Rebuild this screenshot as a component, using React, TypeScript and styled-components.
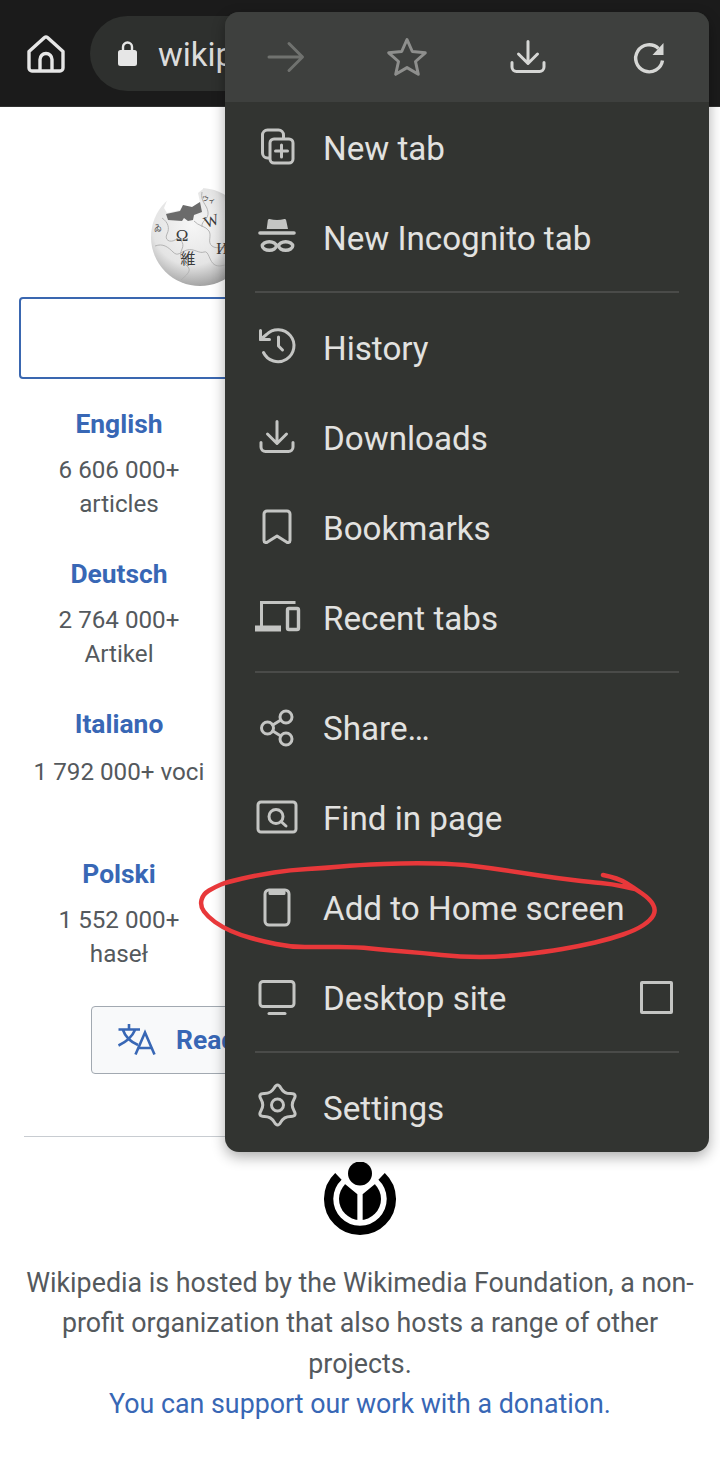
import type { ReactNode } from "react";
import styled, { createGlobalStyle } from "styled-components";

const LINK = "#3867b5";

/* --- styled components --- */

const GlobalStyle = createGlobalStyle`
  html, body {
    margin: 0;
    padding: 0;
    background: #fff;
    font-family: Roboto, "Liberation Sans", sans-serif;
  }
`;

const Screen = styled.div`
  position: relative;
  width: 720px;
  height: 1466px;
  overflow: hidden;
  background: #fff;
`;

const Toolbar = styled.header`
  display: flex;
  align-items: flex-start;
  box-sizing: border-box;
  height: 107px;
  padding: 16px 0 0 27px;
  background: #1b1b1b;
  border-bottom: 1px solid #303130;
`;

const HomeButton = styled.div`
  display: flex;
  margin: 19px 25px 0 0;
`;

const UrlPill = styled.div`
  display: flex;
  align-items: center;
  gap: 21px;
  width: 500px;
  height: 75px;
  padding-left: 28px;
  border-radius: 38px;
  background: #2e302e;
  color: #dcdcdc;
  font-size: 33px;
`;

const UrlText = styled.span`
  padding-top: 2px;
`;

const Page = styled.main`
  display: flex;
  flex-direction: column;
  padding: 0 20px;
`;

const LogoRow = styled.div`
  display: flex;
  height: 100px;
  margin: 81px 0 9px 130px;
`;

const SearchBox = styled.div`
  box-sizing: border-box;
  width: 680px;
  height: 82px;
  margin-left: -1px;
  border: 2px solid #3a67b0;
  border-radius: 4px;
`;

const LangGrid = styled.div`
  display: grid;
  grid-template-columns: 198px 1fr;
  margin: 26px 0 0 0;
`;

const LangCard = styled.div`
  grid-column: 1;
  display: flex;
  flex-direction: column;
  align-items: center;
  height: 150px;
  color: #54595d;
  font-size: 24.2px;
  line-height: 34px;
  text-align: center;
`;

const LangName = styled.div`
  margin-bottom: 10px;
  color: ${LINK};
  font-size: 26.4px;
  font-weight: 700;
  line-height: 38px;
`;

const LangLine = styled.div<{ $shift?: number }>`
  margin-top: ${({ $shift }) => $shift ?? 0}px;
`;

const ReadButton = styled.div`
  display: flex;
  align-items: center;
  gap: 20px;
  box-sizing: border-box;
  width: 538px;
  height: 68px;
  margin: 1px 0 0 71px;
  padding-left: 26px;
  border: 1px solid #a2a9b1;
  border-radius: 4px;
  background: #f8f9fa;
  color: ${LINK};
  font-size: 26.4px;
  font-weight: 700;
`;

const Rule = styled.hr`
  width: 672px;
  height: 1px;
  margin: 62px 0 0 4px;
  border: 0;
  background: #c8ccd1;
`;

const Footer = styled.footer`
  display: flex;
  flex-direction: column;
  align-items: center;
  margin-top: 25px;
  color: #54595d;
  font-size: 26.8px;
  line-height: 40.4px;
  text-align: center;
`;

const FooterText = styled.p`
  width: 680px;
  margin: 27px 0 0 0;
`;

const DonateLink = styled.span`
  color: ${LINK};
`;

const Menu = styled.nav`
  position: absolute;
  top: 12px;
  left: 225px;
  width: 484px;
  height: 1140px;
  overflow: hidden;
  border-radius: 14px;
  background: #323431;
  box-shadow: 0 5px 14px rgba(0, 0, 0, 0.32);
`;

const MenuHeader = styled.div`
  display: grid;
  grid-template-columns: repeat(4, 121px);
  align-items: center;
  justify-items: center;
  height: 90px;
  background: #3e403e;
`;

const HeaderIcon = styled.div<{ $color: string }>`
  display: flex;
  color: ${({ $color }) => $color};
`;

const MenuRow = styled.div`
  display: flex;
  align-items: center;
  height: 90px;
  padding-left: 22px;
  color: #e2e2e0;
  font-size: 33.2px;
`;

const IconSlot = styled.div`
  display: flex;
  justify-content: center;
  flex: none;
  width: 60px;
  margin-right: 16px;
  color: #c4c5c3;
`;

const RowLabel = styled.span`
  flex: 1;
  padding-top: 2px;
`;

const CheckBox = styled.div`
  box-sizing: border-box;
  width: 33px;
  height: 33px;
  margin-right: 36px;
  border: 3.5px solid #c4c5c3;
  border-radius: 2px;
`;

const Divider = styled.div`
  height: 2px;
  margin: 9px 30px;
  background: #4a4b49;
`;

const Scribble = styled.svg`
  position: absolute;
  top: 0;
  left: 0;
  pointer-events: none;
`;

/* --- helpers --- */

type Pt = [number, number];

// quadratic curve through the midpoints, keeps a hand drawn line smooth
const smooth = (pts: Pt[], closed = false) => {
  const mid = (a: Pt, b: Pt): Pt => [(a[0] + b[0]) / 2, (a[1] + b[1]) / 2];
  const fmt = (p: Pt) => `${p[0].toFixed(1)} ${p[1].toFixed(1)}`;
  if (closed) {
    let d = `M${fmt(mid(pts[pts.length - 1], pts[0]))}`;
    pts.forEach((p, i) => {
      d += `Q${fmt(p)} ${fmt(mid(p, pts[(i + 1) % pts.length]))}`;
    });
    return d + "Z";
  }
  let d = `M${fmt(pts[0])}`;
  for (let i = 1; i < pts.length - 1; i++) {
    d += `Q${fmt(pts[i])} ${fmt(mid(pts[i], pts[i + 1]))}`;
  }
  return d + `L${fmt(pts[pts.length - 1])}`;
};

const gearPoints: Pt[] = Array.from({ length: 12 }, (_, i) => {
  const r = i % 2 === 0 ? 23 : 13;
  const a = ((i * 30 - 90) * Math.PI) / 180;
  return [24.5 + r * Math.cos(a), 22 + r * Math.sin(a)];
});

const ringPoints: Pt[] = [
  [603, 875], [618, 878], [634, 888], [650, 899], [656, 910], [651, 920], [636, 930], [610, 939],
  [580, 946], [545, 952], [500, 957], [460, 957], [423, 953], [385, 950], [357, 947], [320, 947],
  [290, 947], [262, 941], [240, 935], [222, 927], [208, 917], [200, 906], [203, 894], [215, 887],
  [227, 882], [258, 875], [290, 870], [325, 868], [357, 865], [410, 863], [457, 864], [490, 868],
  [523, 873], [556, 878], [590, 882], [612, 884], [635, 889],
];

/* --- icons --- */

const Svg = ({ children, size = 48, box = 48 }: { children: ReactNode; size?: number; box?: number }) => (
  <svg
    width={size}
    height={size}
    viewBox={`0 0 ${box} ${box}`}
    fill="none"
    stroke="currentColor"
    strokeWidth={3}
    strokeLinecap="round"
    strokeLinejoin="round"
  >
    {children}
  </svg>
);

const DownloadIcon = () => (
  <Svg>
    <path d="M24 8.500V30M14.500 21l9.500 9.500 9.500-9.500M8 29.500V34a4.500 4.500 0 0 0 4.500 4.500h23A4.500 4.500 0 0 0 40 34v-4.500" />
  </Svg>
);

const icons: Record<string, ReactNode> = {
  newTab: (
    <Svg>
      <path d="M16 35h-1.500a5 5 0 0 1-5-5V12a5 5 0 0 1 5-5h11a5 5 0 0 1 5 5v3.500" />
      <rect x="17" y="16" width="23" height="24" rx="4" />
      <path d="M28.500 22v12M22.500 28h12" />
    </Svg>
  ),
  incognito: (
    <Svg>
      <path d="M16.500 6c5 1.300 10 1.300 15 0 1 0 1.500.5 1.700 1.500l1.800 8.500H13.700l1.100-8.500c.2-1 .7-1.500 1.700-1.500z" fill="currentColor" stroke="none" />
      <path d="M7 20h34" strokeWidth={3.600} />
      <ellipse cx="16.300" cy="33" rx="7" ry="4.300" strokeWidth={3.400} />
      <ellipse cx="32.700" cy="33" rx="7" ry="4.300" strokeWidth={3.400} />
    </Svg>
  ),
  history: (
    <Svg>
      <path d="M7.500 7.500V16.500H16.500" />
      <path d="M7.500 16.500L13.500 11.500A16 16 0 1 1 10.500 29.500" />
      <path d="M25.500 14V23L29.500 27" />
    </Svg>
  ),
  downloads: <DownloadIcon />,
  bookmarks: (
    <Svg>
      <path d="M14 8h20a3 3 0 0 1 3 3v26.500c0 2-2 2.600-3.500 1.500L24 33l-9.500 6c-1.500 1.100-3.500.5-3.500-1.500V11a3 3 0 0 1 3-3z" />
    </Svg>
  ),
  recent: (
    <Svg>
      <path d="M8.500 33V9.500H42.500" strokeLinecap="butt" strokeLinejoin="miter" />
      <path d="M2 35.500h26" strokeWidth={6} strokeLinecap="butt" />
      <rect x="34.500" y="15.500" width="11" height="21" rx="1.500" strokeWidth={3.400} />
    </Svg>
  ),
  share: (
    <Svg>
      <circle cx="33" cy="14" r="6" />
      <circle cx="14.500" cy="25" r="6" />
      <circle cx="33" cy="36" r="6" />
      <path d="M19.800 22 27.800 17M19.800 28l8 5" />
    </Svg>
  ),
  find: (
    <Svg>
      <rect x="5" y="9" width="38" height="30" rx="3" />
      <circle cx="23" cy="23.500" r="7" />
      <path d="M28 28.500l5 4.500" />
    </Svg>
  ),
  addHome: (
    <Svg>
      <rect x="12" y="7" width="24" height="35" rx="4" />
      <path d="M17 9h14v1.500H17z" fill="currentColor" />
    </Svg>
  ),
  desktop: (
    <Svg>
      <rect x="7" y="8.500" width="34" height="25" rx="3" />
      <path d="M16 40.500h16" />
    </Svg>
  ),
  settings: (
    <Svg>
      <path d={smooth(gearPoints, true)} />
      <circle cx="24.500" cy="22" r="6" />
    </Svg>
  ),
};

const WikiGlobe = () => (
  <svg width="100" height="100" viewBox="0 0 100 100">
    <defs>
      <radialGradient id="globeShade" cx="0.42" cy="0.38" r="0.68">
        <stop offset="0" stopColor="#f6f6f6" />
        <stop offset="0.6" stopColor="#e4e4e4" />
        <stop offset="1" stopColor="#939393" />
      </radialGradient>
    </defs>
    <circle cx="50" cy="49" r="49" fill="url(#globeShade)" />
    <g fill="none" stroke="#aeaeae" strokeWidth="0.9">
      <path d="M12 30c6 4 8 10 5 16s3 9 8 6 10 3 7 9-1 12 5 17-2 10-6 14" />
      <path d="M44 33c4 5 12 5 15 10s-2 11 3 15 12-1 16 4" />
      <path d="M5 58c8-3 13 1 18 6s7 0 14-2 12 4 17 2 5 10 11 13 10-2 14 1" />
      <path d="M52 4c-2 10 5 12 6 20s-7 8-6 15" />
    </g>
    <polygon points="0,0 23,2 18,10 14,20 17,25 30,22 33,17 42,19 50,14 48,5 53,1 53,0" fill="#fff" />
    <polygon points="16,26 30,23 33,17 42,19 50,14 52,24 44,27 43,32 38,33 34,30 32,33 18,32" fill="#6b6b6b" />
    <g fill="#3b3b3b" fontFamily="'Liberation Serif', 'Noto Sans CJK JP', serif" textAnchor="middle">
      <text x="32" y="53" fontSize="17">Ω</text>
      <text x="63" y="38" fontSize="16" transform="rotate(-18 63 38)">W</text>
      <text x="38" y="76" fontSize="15">維</text>
      <text x="58" y="14" fontSize="7" transform="rotate(15 58 14)">ウィ</text>
      <text x="8" y="43" fontSize="8">ゐ</text>
      <text x="72" y="66" fontSize="16">И</text>
    </g>
  </svg>
);

const WikimediaLogo = () => (
  <svg width="72" height="74" viewBox="0 0 72 74">
    <path d="M14.400 14.300A31.350 31.350 0 1 0 57.600 14.300" fill="none" stroke="#000" strokeWidth="9.300" />
    <circle cx="36" cy="37" r="21" fill="#000" />
    <polygon points="20,18 36,31 52,18 36,4" fill="#fff" />
    <path d="M36 62V31L19 17M36 31l17-14" fill="none" stroke="#fff" strokeWidth="5.300" />
    <circle cx="36" cy="11.500" r="12" fill="#000" />
  </svg>
);

/* --- data --- */

const languages = [
  { name: "English", lines: ["6 606 000+", "articles"] },
  { name: "Deutsch", lines: ["2 764 000+", "Artikel"] },
  { name: "Italiano", lines: ["1 792 000+ voci"], shift: 2 },
  { name: "Polski", lines: ["1 552 000+", "haseł"] },
];

type MenuEntry = { icon: string; label: string; check?: boolean };

const sections: MenuEntry[][] = [
  [
    { icon: "newTab", label: "New tab" },
    { icon: "incognito", label: "New Incognito tab" },
  ],
  [
    { icon: "history", label: "History" },
    { icon: "downloads", label: "Downloads" },
    { icon: "bookmarks", label: "Bookmarks" },
    { icon: "recent", label: "Recent tabs" },
  ],
  [
    { icon: "share", label: "Share…" },
    { icon: "find", label: "Find in page" },
    { icon: "addHome", label: "Add to Home screen" },
    { icon: "desktop", label: "Desktop site", check: true },
  ],
  [{ icon: "settings", label: "Settings" }],
];

/* --- component --- */

export default function App() {
  return (
    <Screen>
      <GlobalStyle />

      <Toolbar>
        <HomeButton>
          <svg width="38" height="38" viewBox="0 0 38 38" fill="none" stroke="#e6e6e6" strokeWidth="3.400" strokeLinejoin="round">
            <path d="M2 16.500 17.500 2.500a2.400 2.400 0 0 1 3 0L36 16.500V33a3 3 0 0 1-3 3H5a3 3 0 0 1-3-3z" />
            <path d="M13 36V24.500a6 6 0 0 1 12 0V36" />
          </svg>
        </HomeButton>
        <UrlPill>
          <svg width="19" height="25" viewBox="0 0 19 25" fill="#e6e6e6">
            <path d="M2.500 9h14A2.500 2.500 0 0 1 19 11.500v11a2.500 2.500 0 0 1-2.500 2.500h-14A2.500 2.500 0 0 1 0 22.500v-11A2.500 2.500 0 0 1 2.500 9z" />
            <path d="M5 10V6a4.500 4.500 0 0 1 9 0v4" fill="none" stroke="#e6e6e6" strokeWidth="2.400" />
          </svg>
          <UrlText>wikipedia.org</UrlText>
        </UrlPill>
      </Toolbar>

      <Page>
        <LogoRow>
          <WikiGlobe />
        </LogoRow>
        <SearchBox />

        <LangGrid>
          {languages.map((l) => (
            <LangCard key={l.name}>
              <LangName>{l.name}</LangName>
              {l.lines.map((line) => (
                <LangLine key={line} $shift={l.shift}>
                  {line}
                </LangLine>
              ))}
            </LangCard>
          ))}
        </LangGrid>

        <ReadButton>
          <svg width="38" height="32" viewBox="0 0 38 32" fill="none" stroke={LINK} strokeWidth="2.600">
            <path d="M11 0v5M.5 5.500H22M5 6c2 6 8 12 15 15M17 6C14 13 8 18 .5 21.500" />
            <path d="M17.500 30.500 27 8.500l9.500 22M20.500 24h13" />
          </svg>
          Read
        </ReadButton>

        <Rule />

        <Footer>
          <WikimediaLogo />
          <FooterText>
            Wikipedia is hosted by the Wikimedia Foundation, a non-profit organization that also hosts a range of
            other projects.
            <br />
            <DonateLink>You can support our work with a donation.</DonateLink>
          </FooterText>
        </Footer>
      </Page>

      <Menu>
        <MenuHeader>
          <HeaderIcon $color="#70726f">
            <Svg>
              <path d="M7 24h33M27 10.500 40.500 24 27 37.500" />
            </Svg>
          </HeaderIcon>
          <HeaderIcon $color="#8e8f8d">
            <Svg>
              <path d="M24 6.500l5.300 12 13 1.300-9.800 8.700 2.800 12.800L24 34.600l-11.300 6.700 2.800-12.800-9.800-8.700 13-1.300z" />
            </Svg>
          </HeaderIcon>
          <HeaderIcon $color="#d6d7d5">
            <DownloadIcon />
          </HeaderIcon>
          <HeaderIcon $color="#d6d7d5">
            <Svg>
              <path d="M33.500 15.500A13.500 13.500 0 1 0 37.500 27.500" strokeWidth={3.400} strokeLinecap="butt" />
              <path d="M38.500 10v12H27.500z" fill="currentColor" stroke="none" />
            </Svg>
          </HeaderIcon>
        </MenuHeader>

        {sections.map((section, i) => (
          <div key={section[0].label}>
            {i > 0 && <Divider />}
            {section.map((entry) => (
              <MenuRow key={entry.label}>
                <IconSlot>{icons[entry.icon]}</IconSlot>
                <RowLabel>{entry.label}</RowLabel>
                {entry.check && <CheckBox />}
              </MenuRow>
            ))}
          </div>
        ))}
      </Menu>

      {/* red marker ring someone drew over the screenshot */}
      <Scribble width="720" height="1466" viewBox="0 0 720 1466" fill="none">
        <path d={smooth(ringPoints)} stroke="#e8383a" strokeWidth="4.500" strokeLinecap="round" strokeLinejoin="round" />
      </Scribble>
    </Screen>
  );
}
